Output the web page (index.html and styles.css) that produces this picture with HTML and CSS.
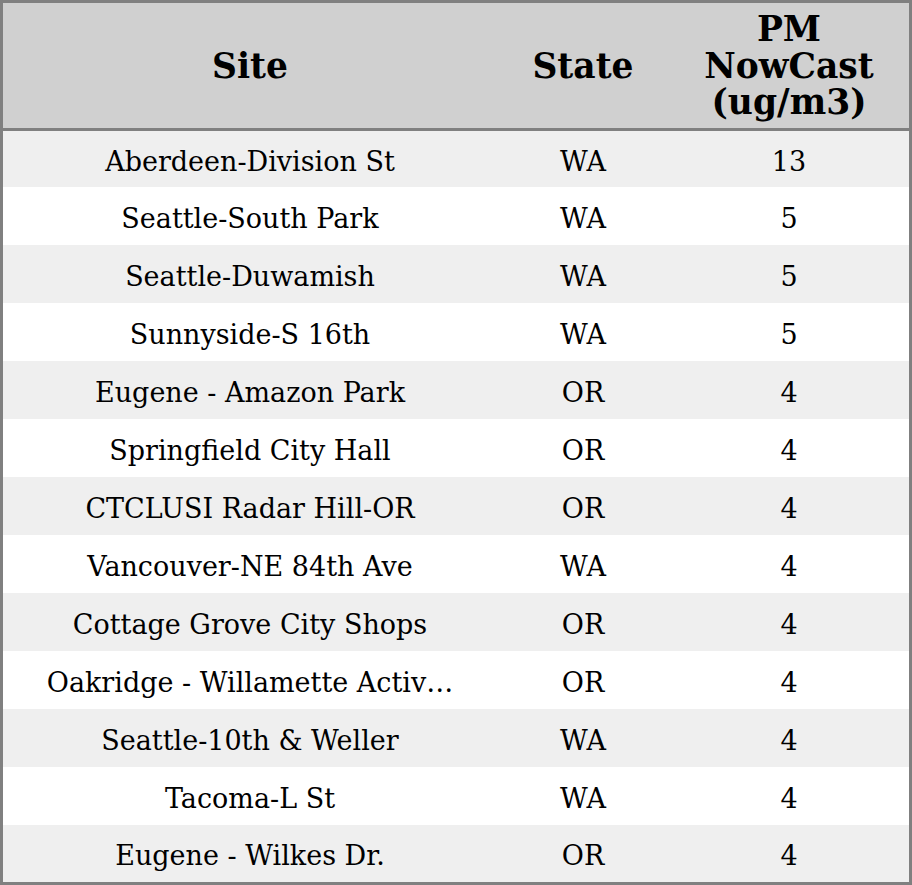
FILE: index.html
```html
<!DOCTYPE html>
<html>
<head>
<meta charset="utf-8">
<link rel="stylesheet" href="styles.css">
</head>
<body>
<table class="aq">
  <colgroup><col class="c-site"><col class="c-state"><col class="c-pm"></colgroup>
  <thead>
    <tr class="head"><th>Site</th><th>State</th><th>PM<br>NowCast<br>(ug/m3)</th></tr>
  </thead>
  <tbody>
    <tr class="odd first"><td>Aberdeen-Division St</td><td>WA</td><td>13</td></tr>
    <tr><td>Seattle-South Park</td><td>WA</td><td>5</td></tr>
    <tr class="odd"><td>Seattle-Duwamish</td><td>WA</td><td>5</td></tr>
    <tr><td>Sunnyside-S 16th</td><td>WA</td><td>5</td></tr>
    <tr class="odd"><td>Eugene - Amazon Park</td><td>OR</td><td>4</td></tr>
    <tr><td>Springfield City Hall</td><td>OR</td><td>4</td></tr>
    <tr class="odd"><td>CTCLUSI Radar Hill-OR</td><td>OR</td><td>4</td></tr>
    <tr><td>Vancouver-NE 84th Ave</td><td>WA</td><td>4</td></tr>
    <tr class="odd"><td>Cottage Grove City Shops</td><td>OR</td><td>4</td></tr>
    <tr><td>Oakridge - Willamette Activ…</td><td>OR</td><td>4</td></tr>
    <tr class="odd"><td>Seattle-10th &amp; Weller</td><td>WA</td><td>4</td></tr>
    <tr><td>Tacoma-L St</td><td>WA</td><td>4</td></tr>
    <tr class="odd last"><td>Eugene - Wilkes Dr.</td><td>OR</td><td>4</td></tr>
  </tbody>
</table>
</body>
</html>
```
FILE: styles.css
```css
html, body { margin: 0; padding: 0; background: #ffffff; }
.aq {
  width: 912px;
  border-collapse: separate;
  border-spacing: 0;
  border: 3px solid #808080;
  table-layout: fixed;
  font-family: "DejaVu Serif", serif;
  color: #000;
}
.c-site { width: 494px; }
.c-state { width: 172px; }
.c-pm { width: 240px; }
.aq th, .aq td { padding: 0; text-align: center; vertical-align: middle; overflow: hidden; }
.head th {
  background: #d0d0d0;
  height: 124px;
  border-bottom: 3px solid #808080;
  font-size: 34.5px;
  font-weight: bold;
  line-height: 36.7px;
  padding-top: 1px;
}
.aq td {
  height: 53px;
  font-size: 27px;
  line-height: 32px;
  white-space: nowrap;
  padding-top: 5px;
}
.first td { height: 51px; }
.last td { height: 52px; }
.odd td { background: #efefef; }
```
